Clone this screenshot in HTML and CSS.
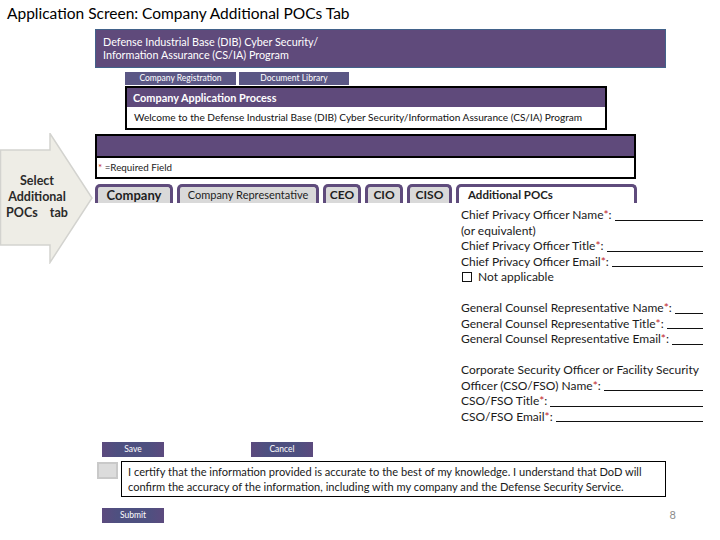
FILE: index.html
```html
<!DOCTYPE html>
<html lang="en">
<head>
  <meta charset="UTF-8" />
  <meta name="viewport" content="width=device-width, initial-scale=1.0" />
  <link rel="stylesheet" href="styles.css">
</head>
<body>

  <h1 class="title">Application Screen: Company Additional POCs Tab</h1>

  <div class="slide">
    <div class="hint">
      <svg class="hint-arrow" width="95" height="131" viewBox="0 0 95 131">
        <polygon points="0.5,17 50,17 50,0.5 92,65 50,129.5 50,112 0.5,112" fill="#eeede6" stroke="#d3d3cf" stroke-width="1.5" />
      </svg>
      <div class="hint-label">Select<br>Additional<br>POCs&nbsp;&nbsp;&nbsp;&nbsp;tab</div>
    </div>

    <div class="screen">
      <div class="banner">
        Defense Industrial Base (DIB) Cyber Security/<br>
        Information Assurance (CS/IA) Program
      </div>

      <div class="nav">
        <span class="nav-btn nav-reg">Company Registration</span>
        <span class="nav-btn nav-doc">Document Library</span>
      </div>

      <div class="process">
        <div class="process-head">Company Application Process</div>
        <div class="process-body">Welcome to the Defense Industrial Base (DIB) Cyber Security/Information Assurance (CS/IA) Program</div>
      </div>

      <div class="required">
        <div class="required-bar"></div>
        <div class="required-note"><span class="star">*</span> =Required Field</div>
      </div>

      <div class="tabs">
        <div class="tab tab-company bold">Company</div>
        <div class="tab tab-rep">Company Representative</div>
        <div class="tab tab-ceo bold">CEO</div>
        <div class="tab tab-cio bold">CIO</div>
        <div class="tab tab-ciso bold">CISO</div>
        <div class="tab tab-active bold">Additional POCs</div>
      </div>

      <div class="fields">
        <div class="line">Chief Privacy Officer Name<span class="star">*</span>:&nbsp;<span class="blank"></span></div>
        <div class="line">(or equivalent)</div>
        <div class="line">Chief Privacy Officer Title<span class="star">*</span>:&nbsp;<span class="blank"></span></div>
        <div class="line">Chief Privacy Officer Email<span class="star">*</span>:&nbsp;<span class="blank"></span></div>
        <div class="line"><span class="box"></span>Not applicable</div>
        <div class="line gap"></div>
        <div class="line">General Counsel Representative Name<span class="star">*</span>:&nbsp;<span class="blank"></span></div>
        <div class="line">General Counsel Representative Title<span class="star">*</span>:&nbsp;<span class="blank"></span></div>
        <div class="line">General Counsel Representative Email<span class="star">*</span>:&nbsp;<span class="blank"></span></div>
        <div class="line gap"></div>
        <div class="line">Corporate Security Officer or Facility Security</div>
        <div class="line">Officer (CSO/FSO) Name<span class="star">*</span>:&nbsp;<span class="blank"></span></div>
        <div class="line">CSO/FSO Title<span class="star">*</span>:&nbsp;<span class="blank"></span></div>
        <div class="line">CSO/FSO Email<span class="star">*</span>:&nbsp;<span class="blank"></span></div>
      </div>

      <div class="actions">
        <span class="btn">Save</span>
        <span class="btn btn-cancel">Cancel</span>
      </div>

      <div class="certify">
        <span class="check"></span>
        <div class="certify-text">
          I certify that the information provided is accurate to the best of my knowledge. I understand that DoD will<br>
          confirm the accuracy of the information, including with my company and the Defense Security Service.
        </div>
      </div>

      <div class="submit-row">
        <span class="btn">Submit</span>
        <span class="page-num">8</span>
      </div>
    </div>
  </div>

</body>
</html>
```

FILE: styles.css
```css
body {
  margin: 0;
  background: white;
  font-family: Lato, "Liberation Sans", sans-serif;
  color: #111;
  width: 720px;
  height: 540px;
  overflow: hidden;
}

.title {
  margin: 0;
  padding-left: 7px;
  height: 29px;
  line-height: 27px;
  font-size: 15.5px;
  font-weight: normal;
  color: #000;
}

.slide {
  display: flex;
}

/* left hint arrow */
.hint {
  position: relative;
  width: 95px;
  height: 131px;
  margin-top: 104px;
  flex-shrink: 0;
}
.hint-arrow {
  position: absolute;
  left: 0;
  top: 0;
}
.hint-label {
  position: relative;
  width: 74px;
  padding-top: 40px;
  text-align: center;
  font-weight: bold;
  font-size: 12.5px;
  line-height: 16px;
  color: #2a2a2a;
}

.screen {
  width: 600px;
}

.banner {
  width: 571px;
  height: 39px;
  box-sizing: border-box;
  padding: 5px 7px 0;
  background: #5f4a7b;
  border: 1px solid #42628a;
  color: white;
  font-size: 10.8px;
  line-height: 13px;
}

.nav {
  display: flex;
  gap: 3px;
  margin: 4px 0 0 30px;
}
.nav-btn {
  height: 13px;
  line-height: 13px;
  background: #5b5785;
  color: white;
  font-size: 8.5px;
  text-align: center;
}
.nav-reg {
  width: 111px;
}
.nav-doc {
  width: 110px;
}

.process {
  width: 482px;
  margin: 1px 0 0 30px;
  border: 2px solid #000;
  box-sizing: border-box;
}
.process-head {
  height: 19px;
  line-height: 19px;
  padding-left: 6px;
  background: #5f4a7b;
  color: white;
  font-weight: bold;
  font-size: 10.9px;
}
.process-body {
  height: 21px;
  line-height: 21px;
  padding-left: 7px;
  font-size: 10.1px;
  color: #111;
}

.required {
  width: 541px;
  margin-top: 4px;
  border: 2px solid #000;
  box-sizing: border-box;
}
.required-bar {
  height: 20px;
  background: #5f4a7b;
  border-bottom: 2px solid #000;
}
.required-note {
  height: 19px;
  line-height: 19px;
  padding-left: 1px;
  font-size: 9.8px;
  color: #222;
}

.star {
  color: #c0262b;
}

.tabs {
  display: flex;
  gap: 4px;
  margin-top: 5px;
  height: 19px;
}
.tab {
  box-sizing: border-box;
  height: 19px;
  border: 3px solid #5f4b7c;
  border-bottom: none;
  border-radius: 5px 5px 0 0;
  background: #d9d9d9;
  color: #1e1e1e;
  font-size: 11px;
  line-height: 16px;
  text-align: center;
}
.tab.bold {
  font-weight: bold;
  font-size: 12px;
}
.tab-company {
  width: 78px;
  font-size: 13px !important;
}
.tab-rep {
  width: 142px;
}
.tab-ceo {
  width: 38px;
}
.tab-cio {
  width: 38px;
}
.tab-ciso {
  width: 45px;
}
.tab-active {
  width: 181px;
  background: white;
  text-align: left;
  padding-left: 9px;
  font-size: 11.5px !important;
}

.fields {
  width: 242px;
  margin: 4px 0 0 366px;
  font-size: 12px;
  line-height: 15.5px;
  color: #1a1a1a;
}
.line {
  display: flex;
  height: 15.5px;
  white-space: nowrap;
}
.blank {
  flex: 1;
  margin-bottom: 2px;
  border-bottom: 1px solid #111;
}
.box {
  width: 8px;
  height: 8px;
  border: 1px solid #111;
  margin: 3px 6px 0 1px;
}

.actions {
  display: flex;
  margin: 18px 0 0 7px;
  gap: 87px;
}
.btn {
  display: block;
  width: 62px;
  height: 15px;
  line-height: 15px;
  background: linear-gradient(to right, #5c4a7e, #4e5080 25%, #4e5080 75%, #5c4a7e);
  color: white;
  font-size: 8.5px;
  text-align: center;
}

.certify {
  display: flex;
  gap: 3px;
  margin: 4px 0 0 2px;
}
.check {
  width: 21px;
  height: 17px;
  margin-top: 1px;
  box-sizing: border-box;
  border: 2px solid #c9c9c9;
  background: #dcdcdc;
}
.certify-text {
  width: 545px;
  height: 36px;
  box-sizing: border-box;
  border: 1px solid #000;
  padding: 2px 6px;
  font-size: 11.1px;
  line-height: 15px;
  color: #1a1a1a;
  white-space: nowrap;
}

.submit-row {
  display: flex;
  justify-content: space-between;
  width: 574px;
  margin: 11px 0 0 7px;
}
.btn:first-child {
  flex-shrink: 0;
}
.page-num {
  font-size: 11px;
  color: #8c8c8c;
  line-height: 13px;
}
```
